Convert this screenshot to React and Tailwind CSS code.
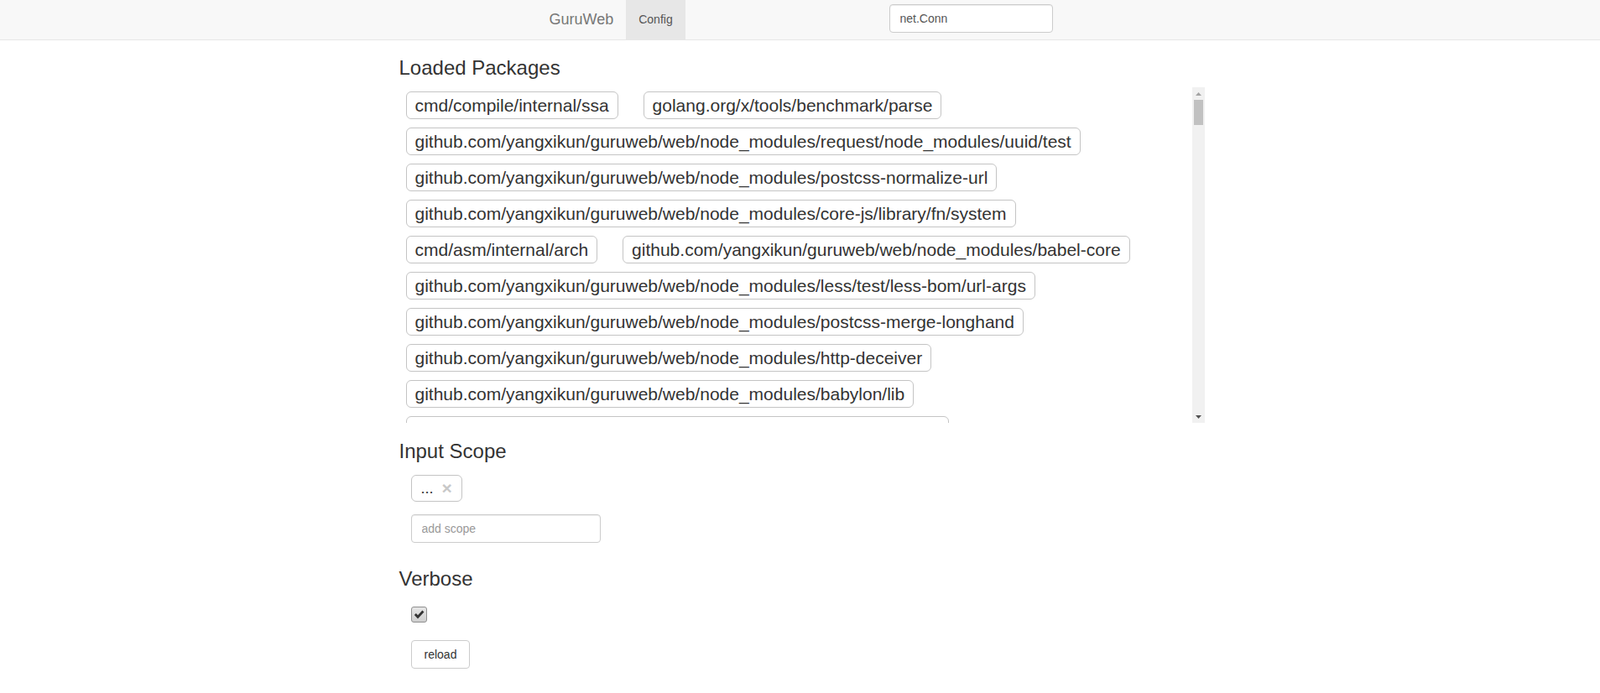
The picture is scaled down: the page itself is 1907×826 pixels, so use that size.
import { useState } from "react";

const prefix = "github.com/yangxikun/guruweb/web/node_modules/";

// visible part of the list, in the order the page shows it
const topPackages = [
	"cmd/compile/internal/ssa",
	"golang.org/x/tools/benchmark/parse",
	prefix + "request/node_modules/uuid/test",
	prefix + "postcss-normalize-url",
	prefix + "core-js/library/fn/system",
	"cmd/asm/internal/arch",
	prefix + "babel-core",
	prefix + "less/test/less-bom/url-args",
	prefix + "postcss-merge-longhand",
	prefix + "http-deceiver",
	prefix + "babylon/lib",
	prefix + "es6-promise/lib",
];

const moreModules = [
	"webpack/lib/optimize", "postcss-colormin", "lodash/fp", "core-js/modules",
	"babel-runtime/helpers", "source-map/lib", "react-dom/lib", "minimatch",
	"uglify-js/tools", "readable-stream/lib", "postcss-discard-comments", "chalk",
	"css-loader/lib", "vue-loader/lib", "less/lib/less", "graceful-fs",
	"postcss-reduce-idents", "mkdirp/bin", "sockjs-client/dist", "debug/src",
	"request/lib", "acorn/dist", "babel-types/lib", "postcss-minify-params",
	"express/lib/router", "mime-types", "async/internal", "qs/lib",
	"handle-thing/lib", "spdy-transport/lib", "regenerator-runtime", "glob",
	"postcss-unique-selectors", "html-webpack-plugin/lib", "caniuse-db/data",
	"tapable/lib", "enhanced-resolve/lib", "memory-fs/lib", "node-libs-browser",
	"browserify-zlib/src", "webpack-dev-server/lib", "ajv/lib/compile",
	"postcss-svgo", "svgo/lib/svgo", "csso/lib", "js-yaml/lib", "esprima/test",
	"cssnano/dist", "autoprefixer/lib", "browserslist", "electron-to-chromium",
];

const goPackages = [
	"net/http", "go/types", "cmd/internal/obj", "golang.org/x/tools/go/ssa",
	"cmd/link/internal/ld", "runtime/internal/sys", "crypto/tls", "encoding/json",
	"golang.org/x/tools/cmd/guru", "cmd/compile/internal/gc", "go/ast",
	"golang.org/x/tools/go/loader", "cmd/vet", "net/rpc/jsonrpc", "text/template",
	"golang.org/x/tools/go/pointer", "cmd/go/internal/load", "html/template",
	"golang.org/x/net/context", "cmd/internal/objfile", "internal/poll",
];

const packages = [
	...topPackages,
	...moreModules.map((m, i) => (i % 3 === 2 ? goPackages[i % goPackages.length] : prefix + m)),
	...goPackages.map((g) => prefix + "go-tools/" + g.split("/").pop()),
	...moreModules.map((m) => prefix + "webpack/node_modules/" + m),
];

const font = { fontFamily: '"Liberation Sans", Arial, Helvetica, sans-serif' };

const CheckMark = () => (
	<svg width="13" height="11" viewBox="0 0 13 11">
		<path
			d="M0.8 6.1 L2.9 4.1 L5 6.3 L10.4 0.6 L12.4 2.6 L5 10.4 Z"
			fill="#333"
		/>
	</svg>
);

// classic scrollbar drawn beside the list (native one is hidden)
const ScrollBar = () => (
	<div className="w-[15px] shrink-0 bg-[#f1f1f1] flex flex-col">
		<div className="h-[15px] flex items-center justify-center">
			<svg width="7" height="4" viewBox="0 0 7 4">
				<path d="M0 4 L3.5 0 L7 4 Z" fill="#a3a3a3" />
			</svg>
		</div>
		<div className="flex-1 px-[2px]">
			<div className="h-[30px] bg-[#c1c1c1]" />
		</div>
		<div className="h-[15px] flex items-center justify-center">
			<svg width="7" height="4" viewBox="0 0 7 4">
				<path d="M0 0 L7 0 L3.5 4 Z" fill="#505050" />
			</svg>
		</div>
	</div>
);

const App = () => {
	const [verbose, setVerbose] = useState(true);
	const [scope, setScope] = useState("");

	return (
		<div className="min-h-screen bg-white text-[#333]" style={font}>
			{/* Navbar */}
			<div className="h-[48px] bg-[#f8f8f8] border-b border-[#e7e7e7]">
				<div className="w-[632px] mx-auto pl-[2px] flex items-stretch h-full">
					<span className="px-[15px] flex items-center text-[18px] text-[#777]">
						GuruWeb
					</span>
					<span className="px-[15px] flex items-center text-[14px] text-[#555] bg-[#e7e7e7]">
						Config
					</span>
					<div className="ml-auto pr-[15px] pt-[5px]">
						<input
							type="text"
							defaultValue="net.Conn"
							className="w-[195px] h-[34px] px-[12px] text-[14px] text-[#555] bg-white border border-[#ccc] rounded-[4px] shadow-[inset_0_1px_1px_rgba(0,0,0,0.075)] outline-none"
						/>
					</div>
				</div>
			</div>

			{/* Content */}
			<div className="w-[964px] mx-auto pl-[4px]">
				<h3 className="mt-[20px] mb-[10px] text-[24px] leading-[26.4px] font-normal">
					Loaded Packages
				</h3>
				<div className="h-[400px] flex">
					<div className="flex-1 overflow-y-scroll [scrollbar-width:none]">
						<div className="flex flex-wrap gap-x-[30px] gap-y-[10px] pt-[5px] pl-[8px] pb-[5px]">
							{packages.map((p, i) => (
								<span
									key={i}
									className="px-[10px] py-[4px] text-[21px] leading-[23px] border border-[#c4c4c4] rounded-[6px] whitespace-nowrap"
								>
									{p}
								</span>
							))}
						</div>
					</div>
					<ScrollBar />
				</div>

				<h3 className="mt-[21px] mb-[10px] text-[24px] leading-[26.4px] font-normal">
					Input Scope
				</h3>
				<div className="pl-[14px]">
					<div className="mt-[4px] inline-flex items-center h-[32px] px-[11px] border border-[#c4c4c4] rounded-[6px]">
						<span className="text-[18px] leading-[20px]">...</span>
						<span className="ml-[10px] text-[21px] leading-[20px] font-bold text-[#c8c8c8]">
							×
						</span>
					</div>
					<div className="mt-[15px]">
						<input
							type="text"
							value={scope}
							onChange={(e) => setScope(e.target.value)}
							placeholder="add scope"
							className="w-[226px] h-[34px] px-[12px] text-[14px] text-[#555] placeholder:text-[#999] bg-white border border-[#ccc] rounded-[4px] shadow-[inset_0_1px_1px_rgba(0,0,0,0.075)] outline-none"
						/>
					</div>
				</div>

				<h3 className="mt-[30px] mb-[10px] text-[24px] leading-[26.4px] font-normal">
					Verbose
				</h3>
				<div className="pl-[14px]">
					<div className="pt-[10px]">
						<button
							onClick={() => setVerbose(!verbose)}
							className="w-[19px] h-[19px] flex items-center justify-center border border-[#8f8f8f] rounded-[3px] bg-[linear-gradient(#e6e6e6,#cfcfcf)]"
						>
							{verbose && <CheckMark />}
						</button>
					</div>
					<div className="mt-[21px]">
						<button className="h-[34px] px-[15px] text-[14px] text-[#333] bg-white border border-[#ccc] rounded-[4px]">
							reload
						</button>
					</div>
				</div>
			</div>
		</div>
	);
};

export default App;
